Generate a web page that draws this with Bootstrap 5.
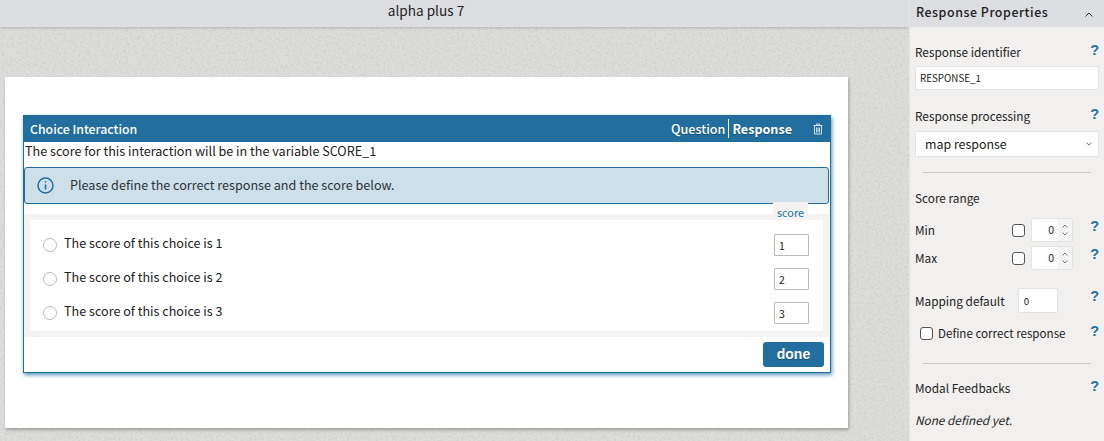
<!DOCTYPE html>
<html lang="en">
<head>
    <meta charset="UTF-8">
    <meta name="viewport" content="width=device-width, initial-scale=1.0">
    <title>alpha plus 7</title>
    <link href="https://cdn.jsdelivr.net/npm/bootstrap@5.3.0/dist/css/bootstrap.min.css" rel="stylesheet">
    <style>
        html, body {
            height: 441px;
            overflow: hidden;
        }
        body {
            font-family: "Noto Sans CJK SC", "Noto Sans", sans-serif;
            font-size: 12.6px;
            color: #222;
            background: #dcdcdb;
        }
        .editor-main {
            width: 909px;
            height: 441px;
            position: relative;
            overflow: hidden;
        }
        .paper-noise {
            position: absolute;
            inset: 0;
            width: 100%;
            height: 100%;
        }
        .title-bar {
            position: relative;
            height: 27px;
            line-height: 21px;
            background: #dddee2;
            font-size: 13.6px;
            text-align: center;
            box-shadow: 0 1px 3px rgba(0,0,0,.2);
            padding-right: 57px;
        }
        .sheet {
            position: relative;
            width: 843px;
            height: 351px;
            margin: 50px 0 0 5px;
            padding: 38px 17px 0 18px;
            background: #fff;
            box-shadow: 1px 2px 3px rgba(90,85,75,.45);
        }
        .interaction {
            height: 258px;
            border: 1px solid #226f9f;
            border-top: 0;
            box-shadow: 1px 2px 4px rgba(34,111,159,.75);
        }
        .interaction-head {
            height: 27px;
            padding: 2px 7px 0 6px;
            background: #226f9f;
            color: #fff;
            font-weight: 500;
            font-size: 12.3px;
        }
        .head-tabs {
            font-size: 12.6px;
            text-shadow: 0 1px 1px rgba(0,0,0,.3);
        }
        .head-tabs span + span {
            border-left: 1px solid #fff;
            margin-left: 3px;
            padding-left: 3px;
            font-weight: 700;
        }
        .trash-icon {
            margin-left: 21px;
        }
        .var-line {
            height: 25px;
            line-height: 18px;
            padding-left: 1px;
        }
        .prompt-box {
            height: 37px;
            margin: 0 1px 10px 0;
            padding: 0 0 0 12px;
            gap: 16px;
            background: #cddfe9;
            border: 1px solid #226f9f;
            border-radius: 3px;
            color: #2b3338;
        }
        .choice-wrap {
            position: relative;
            height: 123px;
            margin: 0 1px 0 0;
            padding: 6px;
            background: #f4f3f1;
        }
        .score-tab {
            position: absolute;
            top: -12px;
            right: 21px;
            width: 35px;
            height: 18px;
            line-height: 20px;
            text-align: center;
            background: #f4f3f1;
            color: #226f9f;
            font-size: 10.8px;
        }
        .choice-list {
            height: 111px;
            padding: 8px 14px 0 13px;
            background: #fff;
        }
        .choice-row {
            height: 34px;
        }
        .choice-label {
            margin-top: -4px;
        }
        .radio-dot {
            width: 14px;
            height: 14px;
            margin: 0 7px 0 0;
            border: 1px solid #bbb;
            border-radius: 50%;
            flex: none;
        }
        .score-input {
            width: 35px;
            height: 22px;
            padding: 0 4px;
            border: 1px solid #bbb;
            border-radius: 1px;
            font-size: 10.5px;
            color: #222;
        }
        .done-row {
            padding: 5px 6px 0 0;
        }
        .done-btn {
            width: 61px;
            height: 25px;
            padding: 0;
            border: 0;
            border-radius: 3px;
            background: #226f9f;
            color: #fff;
            font-family: "Liberation Sans", sans-serif;
            font-size: 14px;
            font-weight: 700;
            line-height: 23px;
            text-shadow: 0 1px 1px rgba(0,0,0,.3);
        }
        .side-panel {
            width: 195px;
            height: 441px;
            border-left: 1px solid #e6e5e4;
            background: #f1f0ef;
            overflow: hidden;
        }
        .side-head {
            height: 27px;
            padding: 0 11px 3px 6px;
            background: #dddee2;
            font-size: 12.4px;
            font-weight: 500;
            letter-spacing: .55px;
        }
        .side-body {
            padding: 0 0 0 5px;
            font-size: 11.8px;
            line-height: 16px;
        }
        .side-row {
            position: relative;
        }
        .help-mark {
            position: absolute;
            top: -2px;
            right: 5px;
            color: #226f9f;
            font-family: "Liberation Sans", sans-serif;
            font-size: 14.5px;
            font-weight: 700;
            line-height: 16px;
        }
        .spin-row {
            height: 24px;
            padding-right: 31px;
        }
        .spin-row .help-mark {
            top: 0;
        }
        .push-18 { margin-top: 18px; }
        .push-17 { margin-top: 17px; }
        .push-16 { margin-top: 16px; }
        .push-12 { margin-top: 12px; }
        .push-4 { margin-top: 4px; }
        .id-input {
            width: 184px;
            height: 24px;
            padding: 0 4px;
            margin-top: 6px;
            border: 1px solid #e3e3e3;
            border-radius: 1px;
            font-size: 9.8px;
            color: #222;
        }
        .map-select {
            width: 184px;
            height: 26px;
            padding: 0 0 0 9px;
            margin-top: 7px;
            border: 1px solid #e3e3e3;
            border-radius: 1px;
            font-size: 12.4px;
            color: #222;
            background-size: 8px 6px;
            background-position: right 5px center;
        }
        .side-rule {
            width: 168px;
            margin: 15px 0 0 8px;
            border: 0;
            border-top: 1px solid #c9c9c9;
            opacity: 1;
        }
        .side-rule.low-rule {
            margin-top: 22px;
        }
        .box-check {
            width: 13px;
            height: 13px;
            margin: 0;
            border: 1px solid #555;
            border-radius: 3px;
            flex: none;
        }
        .spin-box {
            width: 42px;
            height: 24px;
            margin-left: 6px;
            border: 1px solid #e3e3e3;
            border-radius: 2px;
            background: #fff;
            font-size: 10.5px;
        }
        .spin-value {
            flex: 1;
            text-align: right;
            padding-right: 3px;
            line-height: 22px;
        }
        .spin-arrows {
            width: 15px;
            background: #f4f4f4;
        }
        .default-input {
            width: 40px;
            height: 25px;
            padding: 0 5px;
            margin-left: 13px;
            border: 1px solid #e3e3e3;
            border-radius: 1px;
            font-size: 9.8px;
            color: #222;
        }
        .define-row {
            height: 16px;
            gap: 5px;
            padding-left: 5px;
            font-size: 11.6px;
        }
    </style>
</head>
<body>
    <div class="d-flex">
        <div class="editor-main">
            <svg class="paper-noise" aria-hidden="true">
                <filter id="grain" x="0" y="0" width="100%" height="100%">
                    <feTurbulence type="fractalNoise" baseFrequency="0.42" numOctaves="3" seed="4"/>
                    <feColorMatrix values="0 0 0 0 .55  0 0 0 0 .55  0 0 0 0 .53  2.4 0 0 0 -1.05"/>
                </filter>
                <rect width="100%" height="100%" fill="#dddddc"/>
                <rect width="100%" height="100%" filter="url(#grain)" opacity=".5"/>
            </svg>
            <div class="title-bar">alpha plus 7</div>
            <div class="sheet">
                <div class="interaction">
                    <div class="interaction-head d-flex align-items-center justify-content-between">
                        <span>Choice Interaction</span>
                        <div class="d-flex align-items-center">
                            <div class="head-tabs"><span>Question</span><span>Response</span></div>
                            <svg class="trash-icon" width="10" height="12" viewBox="0 0 10 12" fill="none" stroke="#cfe0ea" stroke-width="1">
                                <path d="M.5 2.500h9M3.500 2.500v-1.500h3v1.500M1.500 2.500v8.500h7v-8.500M3.500 4.500v5M5 4.500v5M6.500 4.500v5"/>
                            </svg>
                        </div>
                    </div>
                    <div class="var-line">The score for this interaction will be in the variable SCORE_1</div>
                    <div class="prompt-box d-flex align-items-center">
                        <svg width="17" height="17" viewBox="0 0 17 17" fill="none" stroke="#226f9f" stroke-width="1.500">
                            <circle cx="8.500" cy="8.500" r="7.500"/>
                            <path d="M8.500 7.500v5" stroke-width="1.600"/>
                            <circle cx="8.500" cy="4.800" r=".9" fill="#226f9f" stroke="none"/>
                        </svg>
                        <span>Please define the correct response and the score below.</span>
                    </div>
                    <div class="choice-wrap">
                        <div class="score-tab">score</div>
                        <div class="choice-list">
                            <div class="choice-row d-flex align-items-center">
                                <span class="radio-dot"></span>
                                <span class="choice-label flex-grow-1">The score of this choice is 1</span>
                                <input class="form-control score-input" value="1">
                            </div>
                            <div class="choice-row d-flex align-items-center">
                                <span class="radio-dot"></span>
                                <span class="choice-label flex-grow-1">The score of this choice is 2</span>
                                <input class="form-control score-input" value="2">
                            </div>
                            <div class="choice-row d-flex align-items-center">
                                <span class="radio-dot"></span>
                                <span class="choice-label flex-grow-1">The score of this choice is 3</span>
                                <input class="form-control score-input" value="3">
                            </div>
                        </div>
                    </div>
                    <div class="done-row d-flex justify-content-end">
                        <button class="btn done-btn">done</button>
                    </div>
                </div>
            </div>
        </div>

        <aside class="side-panel">
            <div class="side-head d-flex align-items-center justify-content-between">
                <span>Response Properties</span>
                <svg class="mt-1" width="8" height="5" viewBox="0 0 8 5" fill="none" stroke="#333" stroke-width="1"><path d="M.5 4.500 4 1l3.500 3.500"/></svg>
            </div>
            <div class="side-body">
                <div class="side-row push-17">
                    <div>Response identifier</div>
                    <span class="help-mark">?</span>
                    <input class="form-control id-input" value="RESPONSE_1">
                </div>
                <div class="side-row push-18">
                    <div>Response processing</div>
                    <span class="help-mark">?</span>
                    <select class="form-select map-select"><option>map response</option></select>
                </div>
                <hr class="side-rule">
                <div class="push-17">Score range</div>
                <div class="side-row spin-row d-flex align-items-center push-12">
                    <span class="flex-grow-1">Min</span>
                    <span class="box-check form-check-input mt-0"></span>
                    <div class="spin-box d-flex">
                        <span class="spin-value">0</span>
                        <span class="spin-arrows d-flex flex-column align-items-center justify-content-center gap-1">
                            <svg width="6" height="4" viewBox="0 0 6 4" fill="none" stroke="#555" stroke-width=".8"><path d="M.5 3.500 3 1l2.500 2.500"/></svg>
                            <svg width="6" height="4" viewBox="0 0 6 4" fill="none" stroke="#555" stroke-width=".8"><path d="M.5.500 3 3 5.500.500"/></svg>
                        </span>
                    </div>
                    <span class="help-mark">?</span>
                </div>
                <div class="side-row spin-row d-flex align-items-center push-4">
                    <span class="flex-grow-1">Max</span>
                    <span class="box-check form-check-input mt-0"></span>
                    <div class="spin-box d-flex">
                        <span class="spin-value">0</span>
                        <span class="spin-arrows d-flex flex-column align-items-center justify-content-center gap-1">
                            <svg width="6" height="4" viewBox="0 0 6 4" fill="none" stroke="#555" stroke-width=".8"><path d="M.5 3.500 3 1l2.500 2.500"/></svg>
                            <svg width="6" height="4" viewBox="0 0 6 4" fill="none" stroke="#555" stroke-width=".8"><path d="M.5.500 3 3 5.500.500"/></svg>
                        </span>
                    </div>
                    <span class="help-mark">?</span>
                </div>
                <div class="side-row d-flex align-items-center push-18">
                    <span>Mapping default</span>
                    <input class="form-control default-input" value="0">
                    <span class="help-mark top-0">?</span>
                </div>
                <div class="side-row define-row d-flex align-items-center push-12">
                    <span class="box-check form-check-input mt-0"></span>
                    <span>Define correct response</span>
                    <span class="help-mark">?</span>
                </div>
                <hr class="side-rule low-rule">
                <div class="side-row push-16">
                    <div>Modal Feedbacks</div>
                    <span class="help-mark">?</span>
                </div>
                <div class="fst-italic push-16">None defined yet.</div>
            </div>
        </aside>
    </div>
</body>
</html>
